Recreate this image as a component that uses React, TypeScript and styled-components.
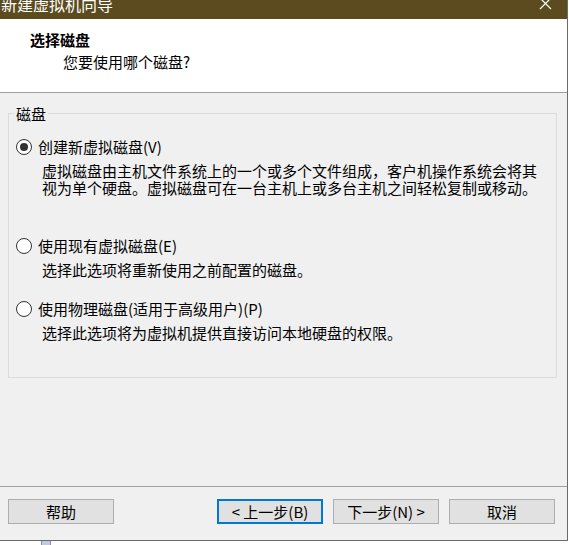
import React from 'react';
import styled, { createGlobalStyle } from 'styled-components';

const GlobalStyle = createGlobalStyle`
  html, body {
    margin: 0;
    padding: 0;
    background: #ffffff;
  }
  body {
    font-family: "Noto Sans CJK SC", "Microsoft YaHei", sans-serif;
    font-size: 15px;
    color: #000000;
  }
`;

type DiskOption = {
  key: string;
  label: string;
  lines: string[];
  checked?: boolean;
  gap: number;
};

const options: DiskOption[] = [
  {
    key: 'new',
    label: '创建新虚拟磁盘(V)',
    lines: [
      '虚拟磁盘由主机文件系统上的一个或多个文件组成，客户机操作系统会将其',
      '视为单个硬盘。虚拟磁盘可在一台主机上或多台主机之间轻松复制或移动。',
    ],
    checked: true,
    gap: 0,
  },
  {
    key: 'existing',
    label: '使用现有虚拟磁盘(E)',
    lines: ['选择此选项将重新使用之前配置的磁盘。'],
    gap: 41,
  },
  {
    key: 'physical',
    label: '使用物理磁盘(适用于高级用户)(P)',
    lines: ['选择此选项将为虚拟机提供直接访问本地硬盘的权限。'],
    gap: 22,
  },
];

const App: React.FC = () => {
  return (
    <>
      <GlobalStyle />
      <Window>
        {/* Title bar, clipped at the top of the shot */}
        <TitleBar>
          <TitleText>新建虚拟机向导</TitleText>
          <CloseIcon width="13" height="13" viewBox="0 0 13 13">
            <path d="M1 1 L12 12 M12 1 L1 12" stroke="#ffffff" strokeWidth="1.2" />
          </CloseIcon>
        </TitleBar>

        <Header>
          <HeaderTitle>选择磁盘</HeaderTitle>
          <HeaderSubtitle>您要使用哪个磁盘?</HeaderSubtitle>
        </Header>

        <Body>
          <GroupBox>
            <GroupLegend>磁盘</GroupLegend>
            {options.map((opt) => (
              <Option key={opt.key} $gap={opt.gap}>
                <OptionRow>
                  <Radio $checked={!!opt.checked} />
                  <OptionLabel>{opt.label}</OptionLabel>
                </OptionRow>
                <Description>
                  {opt.lines.map((line) => (
                    <DescLine key={line}>{line}</DescLine>
                  ))}
                </Description>
              </Option>
            ))}
          </GroupBox>
        </Body>

        <Footer>
          <Button>帮助</Button>
          <Spacer />
          <ButtonGroup>
            <Button $focused>&lt; 上一步(B)</Button>
            <Button>下一步(N) &gt;</Button>
            <Button>取消</Button>
          </ButtonGroup>
        </Footer>
      </Window>
      <BehindStrip />
    </>
  );
};

export default App;

const Window = styled.div`
  width: 568px;
  height: 541px;
  box-sizing: border-box;
  display: flex;
  flex-direction: column;
  background: #f0f0f0;
  border-right: 1px solid #6b6b6b;
  border-bottom: 1px solid #6b6b6b;
`;

const TitleBar = styled.div`
  height: 19px;
  flex: none;
  display: flex;
  justify-content: space-between;
  align-items: flex-start;
  background: #5b4b1f;
  overflow: hidden;
`;

const TitleText = styled.div`
  color: #ffffff;
  font-size: 16px;
  line-height: 16px;
  margin-top: -4px;
  padding-left: 1px;
`;

const CloseIcon = styled.svg`
  margin-top: -3px;
  margin-right: 15px;
`;

const Header = styled.div`
  height: 74px;
  flex: none;
  box-sizing: border-box;
  background: #ffffff;
  border-bottom: 1px solid #a0a0a0;
  padding: 12px 0 0 30px;
  display: flex;
  flex-direction: column;
`;

const HeaderTitle = styled.div`
  font-weight: 700;
  line-height: 18px;
`;

const HeaderSubtitle = styled.div`
  line-height: 18px;
  margin: 4px 0 0 33px;
`;

const Body = styled.div`
  flex: 1;
  padding: 12px 10px 0 8px;
`;

const GroupBox = styled.fieldset`
  margin: 0;
  padding: 16px 8px 0 7px;
  height: 273px;
  box-sizing: border-box;
  border: 1px solid #dcdcdc;
  min-inline-size: 0;
`;

const GroupLegend = styled.legend`
  padding: 0 2px;
  margin-left: -2px;
  line-height: 17px;
`;

const Option = styled.div<{ $gap: number }>`
  margin-top: ${(p) => p.$gap}px;
`;

const OptionRow = styled.div`
  display: flex;
  align-items: center;
  gap: 6px;
  height: 18px;
`;

const Radio = styled.span<{ $checked: boolean }>`
  width: 16px;
  height: 16px;
  box-sizing: border-box;
  border-radius: 50%;
  border: 1px solid #333333;
  background: #ffffff;
  display: flex;
  align-items: center;
  justify-content: center;

  &::after {
    content: '';
    display: ${(p) => (p.$checked ? 'block' : 'none')};
    width: 8px;
    height: 8px;
    border-radius: 50%;
    background: #333333;
  }
`;

const OptionLabel = styled.span`
  line-height: 18px;
`;

const Description = styled.div`
  margin: 6px 0 0 26px;
`;

const DescLine = styled.div`
  line-height: 17px;
  white-space: nowrap;
`;

const Footer = styled.div`
  height: 54px;
  flex: none;
  box-sizing: border-box;
  border-top: 1px solid #a0a0a0;
  padding: 12px 12px 0 8px;
  display: flex;
  align-items: flex-start;
`;

const Spacer = styled.div`
  flex: 1;
`;

const ButtonGroup = styled.div`
  display: flex;
  gap: 10px;
`;

const Button = styled.button<{ $focused?: boolean }>`
  width: 106px;
  height: 25px;
  box-sizing: border-box;
  background: #e1e1e1;
  border: ${(p) => (p.$focused ? '2px solid #0078d7' : '1px solid #adadad')};
  border-radius: 0;
  font-family: inherit;
  font-size: 15px;
  color: #000000;
  padding: 0;
  line-height: 20px;
`;

const BehindStrip = styled.div`
  margin-left: 41px;
  width: 10px;
  height: 4px;
  box-sizing: border-box;
  background: #c3c8dc;
  border-left: 1px solid #8a90a8;
  border-right: 1px solid #8a90a8;
`;
